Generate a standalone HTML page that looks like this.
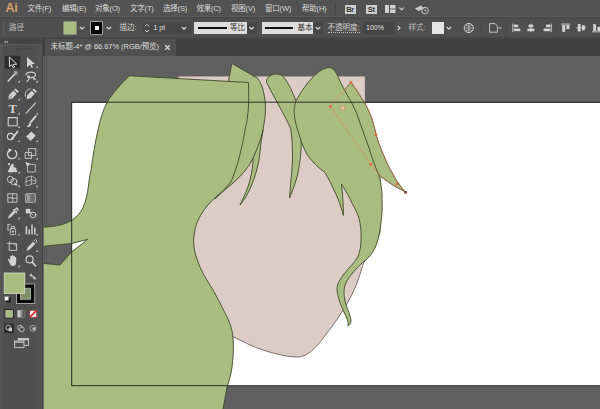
<!DOCTYPE html>
<html lang="zh">
<head>
<meta charset="utf-8">
<title>Adobe Illustrator</title>
<style>
html,body{margin:0;padding:0;}
body{width:600px;height:409px;overflow:hidden;background:#606060;position:relative;
  font-family:"Liberation Sans","Noto Sans CJK SC",sans-serif;color:#d6d6d6;}
.abs{position:absolute;}
#menubar{left:0;top:0;width:600px;height:18.6px;background:linear-gradient(#525252 0,#525252 16.2px,#5a5a5a 16.2px,#5a5a5a 17px,#494949 17px,#494949 18.6px);}
#ctrlbar{left:0;top:18px;width:600px;height:20px;background:linear-gradient(#494949 0,#494949 0.6px,#4f4f4f 0.6px,#4f4f4f 19.3px,#474747 19.3px);}
#tabbar{left:0;top:38px;width:600px;height:17.7px;background:linear-gradient(#454545 0,#454545 0.8px,#404040 0.8px);}
#tab{left:45px;top:39px;width:130.5px;height:16.7px;background:#505050;}
#toolbar{left:0;top:38px;width:42px;height:371px;background:linear-gradient(90deg,#555 0,#555 3px,#4f4f4f 3.5px,#4f4f4f 35px,#535355 36px,#535355 42px);border-right:1.8px solid #444;box-sizing:content-box;}
.m{position:absolute;top:3.4px;font-size:7.5px;line-height:11px;white-space:nowrap;color:#dcdcdc;letter-spacing:-0.2px;}
.c{position:absolute;font-size:7.5px;line-height:10px;white-space:nowrap;color:#d0d0d0;}
#art{left:0;top:0;}
.ib{background:#cdcdcd;color:#3a3a3a;font-size:7.5px;line-height:9.5px;font-weight:bold;text-align:center;letter-spacing:-0.3px;}
</style>
</head>
<body>
<!-- canvas artwork -->
<svg id="art" class="abs" width="600" height="409" viewBox="0 0 600 409">
  <defs><clipPath id="cv"><rect x="43.8" y="55.7" width="557" height="354"/></clipPath></defs>
  <g clip-path="url(#cv)">
    <rect x="43.8" y="55.7" width="3" height="354" fill="#595959"/>
    <rect x="72" y="103" width="540" height="283" fill="#ffffff"/>
    <!-- face -->
    <path id="face" fill="#ddccc5" stroke="#5e5652" stroke-width="0.8"
      d="M178,76 L365.3,76 L365.3,103 L380,176 L380,232 C376,246 370,255 364,262 C363,265 362,268 361.4,270 C359.5,276 357.5,282 355.4,287 C353,292.5 350.5,297.5 347.7,302.5 C344,309 340,315 335.7,321.4 C331.5,327.5 327,333 322.8,338.5 C319.5,343 316,347 312,350.5 C307.5,354.5 303,357 297,357 C289,357 281,355 273,353 C265,351 257,348 250,345 C244,342 238,339 233,337 L190,300 L190,200 L178,103 Z"/>
    <!-- strand 4 (selected, behind strand 3) -->
    <path fill="#aabd80" stroke="#434f2e" stroke-width="0.95"
      d="M330,106 L351,82.5 C356,89 360,96 364,101.7 C367,107 370,113 371.7,118 C374,125 375,130 376,134.5 C378,142 381,149 384,156 C387,164 391,171 395,178 C398,183 402,188 405.5,192.3 C402,190 398,188 395,186.5 C390,183 385,180 380.4,176.4 L370.8,164.4 Z"/>
    <!-- strand 1 -->
    <path fill="#aabd80" stroke="#434f2e" stroke-width="0.95"
      d="M228.2,83 L231.8,63.4 L257.6,78.3 C260.5,82 262.6,87 263.8,93 C264.8,98 265.4,103 265.5,108 C265.6,116 264,123 263,130 C262.5,135 261.5,139 261,142 C260.5,148 260,154 259,160 C257.5,168 255,177 252,184 C249,192 245,199 240,205 C244,197 248,188 250,180 C252,172 253,165 253,158 C250,165 245,171 240,176.5 C235,181.5 229,186.5 224,190.6 L215,199 L215,90 Z"/>
    <path fill="none" stroke="#3e4a2c" stroke-width="0.9" d="M263,130 C261.5,136 260,141 258,146 C256.5,150 255,154 253,158"/>
    <!-- strand 2 -->
    <path fill="#aabd80" stroke="#434f2e" stroke-width="0.95"
      d="M266.6,82.4 C265.6,79 270,74.4 275.4,74 C279,73.8 282,75 284,77.4 C289,84 292.6,92 296,101 C297,110 299,120 300,130 C301,137 301.5,144 301,150 C300.5,159 299,168 297.5,175 C295.5,183 292.5,191 289.5,198 C290,192 290.5,186 291,180 C291.8,172 292.5,163 292.5,155 C292.5,146 292,138 291,130 C289.5,125 287,121 285,117 C279,105 271.6,93 266.6,82.4 Z"/>
    <!-- strand 3 (big) -->
    <path fill="#aabd80" stroke="#434f2e" stroke-width="0.95"
      d="M296,101 C303,88 316,69 329,67.5 C333,67.5 336,72 338,76.7 C341,84 346,93 351,101.7 C355,109 358,116 360,123 C363,131 366,140 369.4,149 C372,158 375,166 378.5,174.5 C380,178 380.7,182 381,185.5 C382,192 382.3,196 382,200 C382.5,208 382,215 381,222 C380.5,227 380,231 379,235 C377.5,242 375.5,248 372.5,252.5 C369.5,257 366,260 362.5,262.5 C357,268 351,274 347.5,280 C345,284 344,288 344,292.5 C344,297 345,301 346,305 C348,310 350,315 351,320 C351,323 350,325 348,326 C348.5,324 348,322 347.5,320 C345,314 342,308 340,302.5 C338,297 337,292 337,287.5 C338,282 341,278 344,274 C349,268 354,263 357.5,257.5 C360,252 361,246 361,240 C361.5,232 360.5,225 359,218 C356.5,211 353,205 350,199 C347,193 344,188 341.5,184 C342.5,194 343.5,205 343.4,215.5 C341,206 338,198 334,190 C331,183.5 328,178 325,172.5 C318,167.5 312,161.5 307.5,155 C304,149 301.5,143 300,137 C297,129 294.5,120 294,112 C294,108 295,104 296,101 Z"/>
    <!-- big hair -->
    <path fill="#aabd80" stroke="#434f2e" stroke-width="0.95"
      d="M129.5,75.8 L248.4,82.5 C248.9,94 249,106 247.5,117 C246.5,124 245.5,127 245,130 C243,142 240.5,153 238,162 C236.2,168 234.3,174 232,179.5 C230.3,182.8 228.3,185.3 226,187.8 C220.5,193 213,199 207,206 C200,215 196,223 195,230 C193.5,236 193.3,241 194,247 C195,254 197,260 200,267 C204,276 208,282 213,290 C217,297 221,305 225,313 C229,320 232,328 233,337 C234,348 233,358 232,367 C231,375 229,381 227,387 L223,409 L223,420 L30,420 L30,263.4 L43,263.4 L60,265 L71.7,252 L87.6,239.4 L71.7,243.4 L43,246.3 L30,246.3 L30,227.3 L43,227.3 C48,227 52,226.5 56,225.8 C62,224.8 67,223.1 71.7,220.4 C77,216.8 80.5,212.5 83,207.8 C86,201 87.5,193 88.4,186 C89.5,178 90,174 91,170 C93,156 95,143 98,130 C100,120 103,110 107,102.5 C112.5,93 121,84 129.5,75.8 Z"/>
    <!-- artboard border -->
    <path fill="none" stroke="#2b2b2b" stroke-width="1" d="M71.7,386 L71.7,102.2 L612,102.2 M71.7,385.7 L612,385.7"/>
    <!-- selection overlay -->
    <g fill="none" stroke="#e47a55" stroke-width="0.6" opacity="0.85">
      <path d="M330.3,106.3 L351,82.5 C356,89 360,96 364,101.7 C367,107 370,113 371.7,118 C374,125 375,130 376,134.5 C378,142 381,149 384,156 C387,164 391,171 395,178 C398,183 402,188 405.5,192.3 C402,190 398,188 395,186.5 C390,183 385,180 380.4,176.4 L370.8,164.4 Z"/>
    </g>
    <g fill="#de6a44" stroke="none">
      <rect x="349.7" y="81.2" width="2.6" height="2.6"/>
      <rect x="329" y="105" width="2.6" height="2.6"/>
      <rect x="374.7" y="133.2" width="2.6" height="2.6"/>
      <rect x="369.5" y="163.1" width="2.6" height="2.6"/>
      <rect x="395.7" y="182.7" width="2.6" height="2.6"/>
      <rect x="404.2" y="191" width="2.6" height="2.6" fill="#7a4432"/>
    </g>
    <rect x="341" y="106.5" width="3.2" height="3.2" fill="#efd9c4" stroke="#e2885c" stroke-width="0.7"/>
  </g>
</svg>

<div id="menubar" class="abs">
  <span class="abs" id="ailogo" style="left:5.5px;top:1px;font-size:12.5px;line-height:14px;font-weight:bold;color:#d8a06a;letter-spacing:-0.3px">Ai</span>
  <span class="m" style="left:27.5px">文件(F)</span>
  <span class="m" style="left:62px">编辑(E)</span>
  <span class="m" style="left:95px">对象(O)</span>
  <span class="m" style="left:130px">文字(T)</span>
  <span class="m" style="left:163px">选择(S)</span>
  <span class="m" style="left:196.5px">效果(C)</span>
  <span class="m" style="left:231px">视图(V)</span>
  <span class="m" style="left:265px">窗口(W)</span>
  <span class="m" style="left:302px">帮助(H)</span>
  <div class="abs" style="left:335px;top:3px;width:1px;height:11px;background:#474747"></div>
  <div class="abs ib" style="left:344.5px;top:4.5px;width:11px;height:9.5px;">Br</div>
  <div class="abs ib" style="left:366px;top:4.5px;width:10.5px;height:9.5px;">St</div>
  <svg class="abs" style="left:380px;top:0" width="60" height="18" viewBox="380 0 60 18">
    <rect x="385" y="5" width="4" height="8" fill="#d0d0d0"/><rect x="390" y="5" width="5.5" height="3.6" fill="#d0d0d0"/><rect x="390" y="9.4" width="5.5" height="3.6" fill="#d0d0d0"/>
    <path d="M399.4,7.6 L401.6,9.8 L403.8,7.6" fill="none" stroke="#d8d8d8" stroke-width="1.1"/>
    <path d="M415,8.4 L421,5.6 L424,8.6 L418.6,11 Z" fill="#c8c8c8"/>
    <circle cx="425" cy="10.6" r="3.3" fill="none" stroke="#c8c8c8" stroke-width="1"/>
    <path d="M425,8.8 L425,11 L426.6,11" fill="none" stroke="#c8c8c8" stroke-width="0.8"/>
  </svg>
</div>
<div id="ctrlbar" class="abs">
  <div class="abs" style="left:2.5px;top:2px;width:1.6px;height:15px;background:#5e5e5e"></div>
  <span class="c" style="left:9px;top:4.5px;color:#bdbdbd">路径</span>
  <div class="abs" style="left:64.3px;top:4.4px;width:11.4px;height:11.6px;background:#aabd80;box-shadow:0 0 0 0.5px #bccaa0"></div>
  <div class="abs" style="left:90.9px;top:4.4px;width:11.4px;height:11.6px;background:#050505;box-shadow:0 0 0 0.6px #d0d0d0"></div>
  <div class="abs" style="left:94.5px;top:7.8px;width:4.3px;height:4.3px;background:#f2f2f2"></div>
  <span class="c" style="left:119.5px;top:4.5px">描边:</span>
  <div class="abs" style="left:143px;top:4.4px;width:48px;height:11.4px;background:#474747"></div>
  <span class="c" style="left:153.5px;top:5px;color:#e0e0e0;font-size:7px">1 pt</span>
  <div class="abs" style="left:194px;top:4.4px;width:52.5px;height:11.4px;background:#dedede"></div>
  <div class="abs" style="left:198px;top:9.4px;width:28.5px;height:1.7px;background:#111"></div>
  <span class="c" style="left:230px;top:5px;color:#333;font-size:7.5px">等比</span>
  <div class="abs" style="left:246.5px;top:4.4px;width:10px;height:11.4px;background:#474747"></div>
  <div class="abs" style="left:261.5px;top:4.4px;width:51.3px;height:11.4px;background:#dedede"></div>
  <div class="abs" style="left:265px;top:9.4px;width:27.6px;height:1.7px;background:#111"></div>
  <span class="c" style="left:297.5px;top:5px;color:#333;font-size:7.5px">基本</span>
  <div class="abs" style="left:313px;top:4.4px;width:10px;height:11.4px;background:#474747"></div>
  <span class="c" style="left:327.5px;top:4.5px;border-bottom:0.7px dotted #bbb;line-height:9.5px">不透明度:</span>
  <div class="abs" style="left:363px;top:4.4px;width:31.5px;height:11.4px;background:#454545"></div>
  <span class="c" style="left:366px;top:5px;color:#e0e0e0;font-size:7px">100%</span>
  <span class="c" style="left:408.5px;top:4.5px;color:#bdbdbd">样式:</span>
  <div class="abs" style="left:432px;top:4.4px;width:11.6px;height:11.4px;background:#e6e6e6"></div>
  <svg class="abs" style="left:0;top:0" width="600" height="20" viewBox="0 18 600 20">
    <g fill="none" stroke="#dcdcdc" stroke-width="1.1">
      <path d="M79.8,26.8 L82,29 L84.2,26.8"/>
      <path d="M106.8,26.8 L109,29 L111.2,26.8"/>
      <path d="M145,26.4 L147,24.4 L149,26.4 M145,30 L147,32 L149,30" stroke-width="0.9"/>
      <path d="M181.8,27 L184,29.2 L186.2,27"/>
      <path d="M249.4,27 L251.6,29.2 L253.8,27"/>
      <path d="M315.8,27 L318,29.2 L320.2,27"/>
      <path d="M397.8,25.8 L400,28 L397.8,30.2"/>
      <path d="M446.6,27 L448.8,29.2 L451,27"/>
    </g>
    <g stroke="#484848" stroke-width="0.8"><path d="M480.5,21 L480.5,36 M506.5,21 L506.5,36 M555.5,21 L555.5,36"/></g>
    <circle cx="468.8" cy="28" r="4.6" fill="none" stroke="#d0d0d0" stroke-width="1"/>
    <path d="M464.2,28 L473.4,28 M468.8,23.4 L468.8,32.6 M465.6,24.8 C467.4,26.6 470.2,26.6 472,24.8 M465.6,31.2 C467.4,29.4 470.2,29.4 472,31.2" fill="none" stroke="#d0d0d0" stroke-width="0.7"/>
    <path d="M489.6,23.6 L495,23.6 L497.4,26 L497.4,32.2 L489.6,32.2 Z" fill="none" stroke="#cfcfcf" stroke-width="0.9"/>
    <path d="M498.6,28 L501.6,28" stroke="#cfcfcf" stroke-width="1"/>
    <g fill="#d2d2d2">
      <rect x="512.4" y="23.6" width="0.9" height="8.6"/><rect x="513.8" y="24.6" width="4.4" height="2.6"/><rect x="513.8" y="28.6" width="6.6" height="2.6"/>
      <rect x="530.4" y="23.6" width="0.9" height="8.6"/><rect x="528.6" y="24.6" width="4.6" height="2.6"/><rect x="527.4" y="28.6" width="7" height="2.6"/>
      <rect x="550.8" y="23.6" width="0.9" height="8.6"/><rect x="546" y="24.6" width="4.4" height="2.6"/><rect x="543.6" y="28.6" width="6.8" height="2.6"/>
      <rect x="561" y="23.6" width="9.4" height="0.9"/><rect x="562.2" y="25" width="3" height="6.8"/><rect x="566.4" y="25" width="3" height="4.2"/>
      <rect x="576.4" y="27.4" width="9.6" height="0.9"/><rect x="577.8" y="24" width="2.8" height="7.6"/><rect x="582" y="25.2" width="2.8" height="5.2"/>
      <rect x="592" y="31.4" width="8" height="0.9"/><rect x="593.2" y="24.2" width="2.8" height="6.8"/><rect x="597.4" y="26.8" width="2.6" height="4.2"/>
    </g>
  </svg>
</div>
<div id="tabbar" class="abs"></div>
<div id="tab" class="abs">
  <span class="c" style="left:5.5px;top:3px;color:#dedede;font-size:7.5px;letter-spacing:-0.05px">未标题-4* @ 66.67% (RGB/预览)</span>
  <svg class="abs" style="left:119px;top:4.5px" width="7" height="7" viewBox="0 0 7 7"><path d="M1.2,1.2 L5.8,5.8 M5.8,1.2 L1.2,5.8" stroke="#e6e6e6" stroke-width="1.2" fill="none"/></svg>
</div>
<div id="toolbar" class="abs"></div>
<svg id="tools" class="abs" style="left:0;top:0" width="44" height="409" viewBox="0 0 44 409">
  <rect x="0" y="38.5" width="41.5" height="5.5" fill="#444"/>
  <path d="M4.2,42 L5.6,40.8 L5.6,43.2 Z M6.2,42 L7.6,40.8 L7.6,43.2 Z" fill="#d8d8d8"/>
  <rect x="0" y="44" width="41.5" height="0.8" fill="#5a5a5a"/>
  <rect x="16" y="47.6" width="15" height="2" fill="#444"/>
  <g fill="none" stroke="#d2d2d2" stroke-width="1.1" stroke-linejoin="round" stroke-linecap="round">
    <!-- direct selection (selected) -->
    <rect x="4.8" y="55.8" width="15.4" height="12.8" fill="#2c2c2c" stroke="none"/>
    <path d="M9.4,57.4 L9.4,66.8 L11.6,64.8 L13.2,67.8 L14.6,67.1 L13.2,64.4 L16.4,64.2 Z" stroke="#f0f0f0" stroke-width="0.9"/>
    <!-- selection -->
    <path d="M27,57 L27,67.6 L29.8,64.8 L31.6,68 L33,67.2 L31.4,64.2 L35,64 Z" fill="#d2d2d2" stroke="none"/>
    <!-- magic wand -->
    <path d="M8.2,81 L14.2,74.6" stroke-width="1.6"/>
    <path d="M15.8,70.8 L15.8,75 M13.8,72.9 L17.8,72.9 M14.4,71.4 L17.2,74.4 M17.2,71.4 L14.4,74.4" stroke-width="0.6"/>
    <!-- lasso -->
    <path d="M26,75 C26,71.5 35.5,71 35.5,74.8 C35.5,78 28,78.6 27.6,76.6 C27.4,75.4 30,75.6 29.6,77.4 C29.3,79 28,80.4 27,81.4" stroke-width="1.1"/>
    <path d="M32.4,76.4 L36.4,79.6 L33.6,80 Z" fill="#d2d2d2" stroke="none"/>
    <!-- pen -->
    <path d="M8,99.6 L9,95 L13.4,90.6 L16.6,93.8 L12.4,98.4 Z" fill="#d2d2d2" stroke="none"/>
    <path d="M14.2,89.8 L15.6,88.4 L18.8,91.6 L17.4,93 Z" fill="#d2d2d2" stroke="none"/>
    <path d="M8,99.6 L11.6,95.8" stroke="#515151" stroke-width="0.7"/>
    <!-- curvature pen -->
    <path d="M26.4,99.2 L27.4,95 L31.6,90.8 L34.6,93.8 L30.6,98.2 Z" fill="#d2d2d2" stroke="none"/>
    <path d="M32.4,90 L33.8,88.6 L36.8,91.6 L35.4,93 Z" fill="#d2d2d2" stroke="none"/>
    <path d="M25.4,96.4 C24.6,91.8 27,89.4 30.2,88.8" stroke-width="0.9"/>
    <!-- line -->
    <path d="M26.2,113.2 L35.4,103.2" stroke-width="1.2"/>
    <!-- rectangle -->
    <rect x="8.2" y="117.6" width="9" height="8.2" stroke-width="1.1"/>
    <!-- paintbrush -->
    <path d="M35.6,116.4 L30.4,122.6" stroke-width="2"/>
    <path d="M29.8,123 C28.8,124 28.6,126.2 26.4,126.8 C28.6,127.6 31,126.4 31.2,124.2 Z" fill="#d2d2d2" stroke="none"/>
    <!-- shaper -->
    <circle cx="10.6" cy="136.6" r="3.2" stroke-width="1.1"/>
    <path d="M11.4,139.4 L17.6,131.6" stroke-width="1.7"/>
    <!-- eraser -->
    <path d="M26.2,136.6 L31.4,131.4 L35.8,135.8 L30.6,141 Z" fill="#d2d2d2" stroke="none"/>
    <path d="M27,138.4 L29.6,141" stroke="#515151" stroke-width="0.8"/>
    <!-- rotate -->
    <path d="M9.6,150.4 C5.8,153 7.4,158.8 12.4,158.6 C17,158.4 18,153 15,150.6" stroke-width="1.3"/>
    <path d="M8,148.4 L12,149.4 L9.4,152.4 Z" fill="#d2d2d2" stroke="none"/>
    <!-- scale -->
    <rect x="25.6" y="152.4" width="6" height="6" stroke-width="0.9"/>
    <rect x="28.8" y="148.6" width="7" height="7" stroke-width="0.9"/>
    <!-- warp / width -->
    <path d="M7.6,171.6 C9.6,169.8 9.4,166 11.6,164.2 C13.6,162.8 14.6,165.6 13.2,167.4 C15.4,166.8 17.4,168.2 16.2,170 C18,170.4 17.6,172.6 15.4,172.2 C12.8,171.6 10.4,173.4 7.6,171.6 Z" fill="#d2d2d2" stroke="none"/>
    <circle cx="9" cy="164.2" r="1.1" fill="#d2d2d2" stroke="none"/>
    <!-- free transform -->
    <rect x="27.6" y="164.4" width="7.6" height="7.6" stroke-width="0.9" stroke-dasharray="1.4 1"/>
    <path d="M25.4,162 L30.4,163.6 L27.2,166.8 Z" fill="#d2d2d2" stroke="none"/>
    <!-- shape builder -->
    <circle cx="10.4" cy="179.4" r="3.1" stroke-width="0.9"/>
    <circle cx="13.8" cy="181.6" r="3.1" stroke-width="0.9"/>
    <path d="M14.2,182.2 L18.4,185.2 L15.4,185.8 Z" fill="#d2d2d2" stroke="none"/>
    <!-- perspective -->
    <path d="M26,185.4 L26,177.6 L31.4,176 L31.4,184 Z M31.4,176 L35.8,178.6 L35.8,183.4 L31.4,184 M26,181.4 L31.4,180 L35.8,181" stroke-width="0.7"/>
    <!-- mesh -->
    <rect x="8.2" y="193.8" width="8.8" height="8.4" stroke-width="0.9"/>
    <path d="M8.2,198 C10.6,196.8 14.4,199.2 17,198 M12.6,193.8 C11.6,196.4 13.6,199.6 12.6,202.2" stroke-width="0.8"/>
    <!-- gradient -->
    <rect x="26.2" y="193.8" width="9" height="8.4" stroke-width="0.9"/>
    <rect x="27" y="194.6" width="3.6" height="6.8" fill="#9a9a9a" stroke="none"/>
    <rect x="30.6" y="194.6" width="3.8" height="6.8" fill="#6e6e6e" stroke="none"/>
    <!-- eyedropper -->
    <path d="M8,218.4 L8.8,215.8 L13.6,210.8 L15.4,212.6 L10.6,217.6 Z" fill="#d2d2d2" stroke="none"/>
    <path d="M13.4,209.6 L16.6,212.8 M14.8,210 L16.6,207.8 L18.2,209.4 L16.2,211.4" stroke-width="1.2"/>
    <!-- blend -->
    <rect x="25.8" y="208.8" width="4.6" height="4.6" fill="#d2d2d2" stroke="none"/>
    <circle cx="33" cy="215" r="2.9" stroke-width="1"/>
    <path d="M28,211 L33,215" stroke-width="0.8"/>
    <!-- symbol sprayer -->
    <rect x="10.2" y="228.6" width="5.4" height="6" rx="1" stroke-width="0.9"/>
    <path d="M11.4,228.4 L11.4,226.4 L14.4,226.4 L14.4,228.4 M8,224.6 L8,230.6 M8,224.8 L10,224.8" stroke-width="0.9"/>
    <circle cx="12.9" cy="231.6" r="1.1" fill="#d2d2d2" stroke="none"/>
    <!-- graph -->
    <path d="M26.4,234.4 L26.4,226.2 M29.2,234.4 L29.2,229.4 M32,234.4 L32,224.6 M34.8,234.4 L34.8,227.6" stroke-width="1.5" stroke-linecap="butt"/>
    <!-- artboard -->
    <rect x="9.6" y="243.6" width="7" height="6.8" stroke-width="0.9"/>
    <path d="M7.4,243.4 L9.6,243.4 M9.6,241.6 L9.6,243.6 M13.4,243.6 L15,245.2 L16.6,245.2" stroke-width="0.8"/>
    <!-- slice -->
    <path d="M26.4,251 L27.6,247.4 L33,241.8 L35.2,244 L29.8,249.6 Z" fill="#d2d2d2" stroke="none"/>
    <path d="M33.8,241 L35.4,239.4 L37,241 L35.6,242.8" stroke-width="0.9"/>
    <!-- hand -->
    <path d="M9.4,262.6 L8,259.8 C7.6,258.8 8.8,258.4 9.4,259.2 L10.2,260.4 L10.2,256.6 C10.2,255.6 11.6,255.6 11.6,256.6 L11.8,255.8 C11.8,254.8 13.2,254.8 13.2,255.8 L13.4,256.4 C13.4,255.4 14.8,255.4 14.8,256.4 L15,257.6 C15,256.8 16.2,256.8 16.2,257.8 L16.2,262 C16.2,264.4 15,266 13,266 C11,266 10.2,264.6 9.4,262.6 Z" fill="#d2d2d2" stroke="none"/>
    <!-- zoom -->
    <circle cx="29.6" cy="259.4" r="3.5" stroke-width="1.2"/>
    <path d="M32.2,262.2 L35.4,265.8" stroke-width="1.7"/>
  </g>
  <!-- flyout indicators -->
  <g fill="#cfcfcf">
    <path d="M35.7,68.0 L37.8,68.0 L37.8,65.9 Z"/>
    <path d="M17.7,82.4 L19.8,82.4 L19.8,80.3 Z"/><path d="M35.7,82.4 L37.8,82.4 L37.8,80.3 Z"/>
    <path d="M17.7,100.4 L19.8,100.4 L19.8,98.3 Z"/>
    <path d="M17.7,114.4 L19.8,114.4 L19.8,112.3 Z"/><path d="M35.7,114.4 L37.8,114.4 L37.8,112.3 Z"/>
    <path d="M17.7,128.0 L19.8,128.0 L19.8,125.9 Z"/><path d="M35.7,128.0 L37.8,128.0 L37.8,125.9 Z"/>
    <path d="M17.7,142.0 L19.8,142.0 L19.8,139.9 Z"/><path d="M35.7,142.0 L37.8,142.0 L37.8,139.9 Z"/>
    <path d="M17.7,159.6 L19.8,159.6 L19.8,157.5 Z"/><path d="M35.7,159.6 L37.8,159.6 L37.8,157.5 Z"/>
    <path d="M17.7,173.6 L19.8,173.6 L19.8,171.5 Z"/>
    <path d="M17.7,187.2 L19.8,187.2 L19.8,185.1 Z"/><path d="M35.7,187.2 L37.8,187.2 L37.8,185.1 Z"/>
    <path d="M17.7,219.2 L19.8,219.2 L19.8,217.1 Z"/>
    <path d="M17.7,235.6 L19.8,235.6 L19.8,233.5 Z"/><path d="M35.7,235.6 L37.8,235.6 L37.8,233.5 Z"/>
    <path d="M35.7,252.0 L37.8,252.0 L37.8,249.9 Z"/>
    <path d="M17.7,267.2 L19.8,267.2 L19.8,265.1 Z"/>
  </g>
  <text x="12.7" y="112.6" font-family="'Liberation Serif',serif" font-size="12.5" font-weight="bold" fill="#d6d6d6" text-anchor="middle">T</text>
  <!-- fill / stroke -->
  <rect x="16.4" y="284" width="18.4" height="19.4" fill="#0a0a0a" stroke="#cfcfcf" stroke-width="0.7"/>
  <rect x="20.6" y="288.2" width="10" height="11" fill="#7f8f68" stroke="#cfcfcf" stroke-width="0.7"/>
  <rect x="4.2" y="273" width="20.6" height="20.4" fill="#aabd80" stroke="#d8dfc8" stroke-width="0.8"/>
  <path d="M30.6,275.2 C32.8,275 34.6,276.4 34.6,278.6 M29.6,275.2 L31.4,273.8 L31.4,276.6 Z M34.6,279.6 L33.2,277.8 L36,277.8 Z" fill="#d0d0d0" stroke="#d0d0d0" stroke-width="0.6"/>
  <rect x="6.6" y="298.4" width="3.8" height="3.8" fill="#1a1a1a" stroke="#1a1a1a" stroke-width="0.6"/>
  <rect x="4.8" y="296.6" width="3.8" height="3.8" fill="#f4f4f4" stroke="#888" stroke-width="0.4"/>
  <!-- color / gradient / none -->
  <rect x="4.4" y="309" width="9.6" height="9.6" fill="#2c2c2c"/>
  <rect x="5.8" y="310.4" width="6.8" height="6.8" fill="#aabd80" stroke="#d8d8d8" stroke-width="0.5"/>
  <defs><linearGradient id="gr" x1="0" x2="1" y1="0" y2="0"><stop offset="0" stop-color="#f0f0f0"/><stop offset="1" stop-color="#333"/></linearGradient></defs>
  <rect x="17.8" y="310.4" width="6.8" height="6.8" fill="url(#gr)" stroke="#bbb" stroke-width="0.4"/>
  <rect x="29.8" y="310.4" width="6.8" height="6.8" fill="#f6f6f6" stroke="#c02a2a" stroke-width="0.6"/>
  <path d="M30,317 L36.4,310.6" stroke="#d21f1f" stroke-width="1.5"/>
  <!-- draw modes -->
  <rect x="4.4" y="323.6" width="9.4" height="9.6" fill="#2c2c2c"/>
  <circle cx="8.4" cy="327.6" r="2.4" fill="none" stroke="#d0d0d0" stroke-width="0.9"/>
  <rect x="8.6" y="327.8" width="3.4" height="3.4" fill="#d0d0d0"/>
  <circle cx="20" cy="327.6" r="2.4" fill="none" stroke="#c4c4c4" stroke-width="0.9"/>
  <circle cx="21.8" cy="329.4" r="2.4" fill="#515151" stroke="#c4c4c4" stroke-width="0.9"/>
  <circle cx="33" cy="328.4" r="3" fill="none" stroke="#a8a8a8" stroke-width="0.9"/>
  <rect x="32.6" y="327.4" width="2.6" height="2.6" fill="#c4c4c4"/>
  <!-- screen mode -->
  <rect x="18.4" y="338.4" width="10.2" height="7" fill="#515151" stroke="#d0d0d0" stroke-width="0.9"/>
  <rect x="14.6" y="341" width="9.4" height="6.6" fill="#515151" stroke="#d0d0d0" stroke-width="0.9"/>
  <path d="M14.6,342.2 L24,342.2 M18.4,339.6 L28.6,339.6" stroke="#d0d0d0" stroke-width="1.1"/>
</svg>

</body>
</html>
